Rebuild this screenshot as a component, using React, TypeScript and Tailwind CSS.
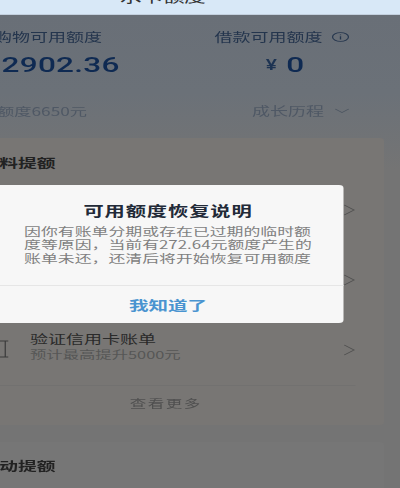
const Chevron = () => (
  <svg width="8" height="12" viewBox="0 0 8 12" fill="none" className="shrink-0 text-[#4f4f4f]">
    <path d="M0.5 1 L7 6 L0.5 11" stroke="currentColor" strokeWidth="0.8" />
  </svg>
);

const Down = () => (
  <svg width="10" height="6" viewBox="0 0 10 6" fill="none" className="text-[#4d5662]">
    <path d="M0.5 1 L5 4.5 L9.5 1" stroke="currentColor" strokeWidth="0.8" />
  </svg>
);

const Info = () => (
  <svg width="12" height="10" viewBox="0 0 12 10" fill="none" className="text-[#24354d]">
    <ellipse cx="6" cy="5" rx="5.3" ry="4.4" stroke="currentColor" strokeWidth="0.8" />
    <path d="M6 4.2 V7.4 M6 2.4 V3.2" stroke="currentColor" strokeWidth="0.9" />
  </svg>
);

const Row = ({ children }: { children?: React.ReactNode }) => (
  <div className="flex h-[70px] items-center justify-between pr-[19px]">
    <div className="flex items-center">{children}</div>
    <Chevron />
  </div>
);

export default function App() {
  return (
    <div className="relative h-[488px] w-[400px] overflow-hidden bg-[#747474]">
      {/* reference is a stretched photo, so the whole page is laid out narrow and widened */}
      <div className="relative h-[488px] w-[267px] origin-top-left scale-x-150 font-['Noto_Sans_CJK_SC',sans-serif] blur-[0.35px]">
        <div className="h-[15px] overflow-hidden border-b border-[#c3d0de] bg-[#d8e8f7] pl-[80px]">
          <div className="-mt-[12px] text-[14.3px] leading-[16px] text-[#333]">水卡额度</div>
        </div>

        <div className="h-[155px] bg-gradient-to-b from-[#696f77] via-[#6b7178] to-[#747474] pr-[34px] text-[12px]">
          <div className="flex justify-between pt-[14px] leading-[16px] text-[#24354d]">
            <span className="-ml-[4px]">购物可用额度</span>
            <span className="flex items-center gap-[6px]">
              借款可用额度
              <Info />
            </span>
          </div>
          <div className="mt-[7px] flex items-center justify-between pr-[30px] font-['Roboto',sans-serif] text-[21px] font-medium leading-[26px] tracking-[0.2px] text-[#0f2a52]">
            <span className="ml-[1px]">2902.36</span>
            <span className="flex items-center gap-[6px]">
              <span className="text-[14px] text-[#1d3352]">¥</span>0
            </span>
          </div>
          <div className="mt-[25px] flex items-center justify-between leading-[16px] text-[#4f5865]">
            <span className="-ml-[2px] text-[11.5px]">额度6650元</span>
            <span className="flex items-center gap-[7px]">
              成长历程
              <Down />
            </span>
          </div>
        </div>

        <div className="relative -mt-[32px] mr-[11px] -ml-[20px]">
          <div className="h-[287px] rounded-[3px] bg-[#787674] pl-[7px]">
            <div className="h-[37px] pt-[17px] text-[12.5px] font-bold leading-[16px] text-[#222]">资料提额</div>
            <Row />
            <Row />
            <Row>
              <svg width="19" height="18" viewBox="0 0 19 18" fill="none" className="-mt-[2px] text-[#3a3a3a]">
                <path d="M8 1 H18.5 M16.5 1 V17 M13 17 H18.5" stroke="currentColor" strokeWidth="0.8" />
              </svg>
              <div className="ml-[14px] -mt-[7px]">
                <div className="text-[12px] leading-[16px] text-[#2a2a2a]">验证信用卡账单</div>
                <div className="text-[10.9px] leading-[15px] text-[#565656]">预计最高提升5000元</div>
              </div>
            </Row>
            <div className="mr-[19px] border-t border-[#727170] pr-[3px] pt-[9px] text-center text-[11px] leading-[16px] tracking-[1px] text-[#4f4f4f]">
              查看更多
            </div>
          </div>
          <div className="mt-[17px] h-[60px] rounded-[3px] bg-[#767676] pl-[7px] pt-[16px] text-[12.5px] font-bold leading-[16px] text-[#222]">
            活动提额
          </div>
        </div>

        <div className="absolute top-[185px] left-[-5px] flex h-[138px] w-[234px] flex-col rounded-[3px] bg-[#f7f7f7]">
          <div className="pt-[16px] text-center text-[13.5px] font-bold leading-[18px] tracking-[0.6px] text-[#222a38]">
            可用额度恢复说明
          </div>
          <div className="mt-[6px] px-[21px] text-[11.25px] leading-[13.3px] text-[#7f7f7f]">
            因你有账单分期或存在已过期的临时额度等原因，当前有272.64元额度产生的账单未还，还清后将开始恢复可用额度
          </div>
          <div className="mt-auto flex h-[38px] items-center justify-center border-t border-[#e6e6e6] text-[13px] font-bold text-[#4a94d0]">
            我知道了
          </div>
        </div>
      </div>
    </div>
  );
}
